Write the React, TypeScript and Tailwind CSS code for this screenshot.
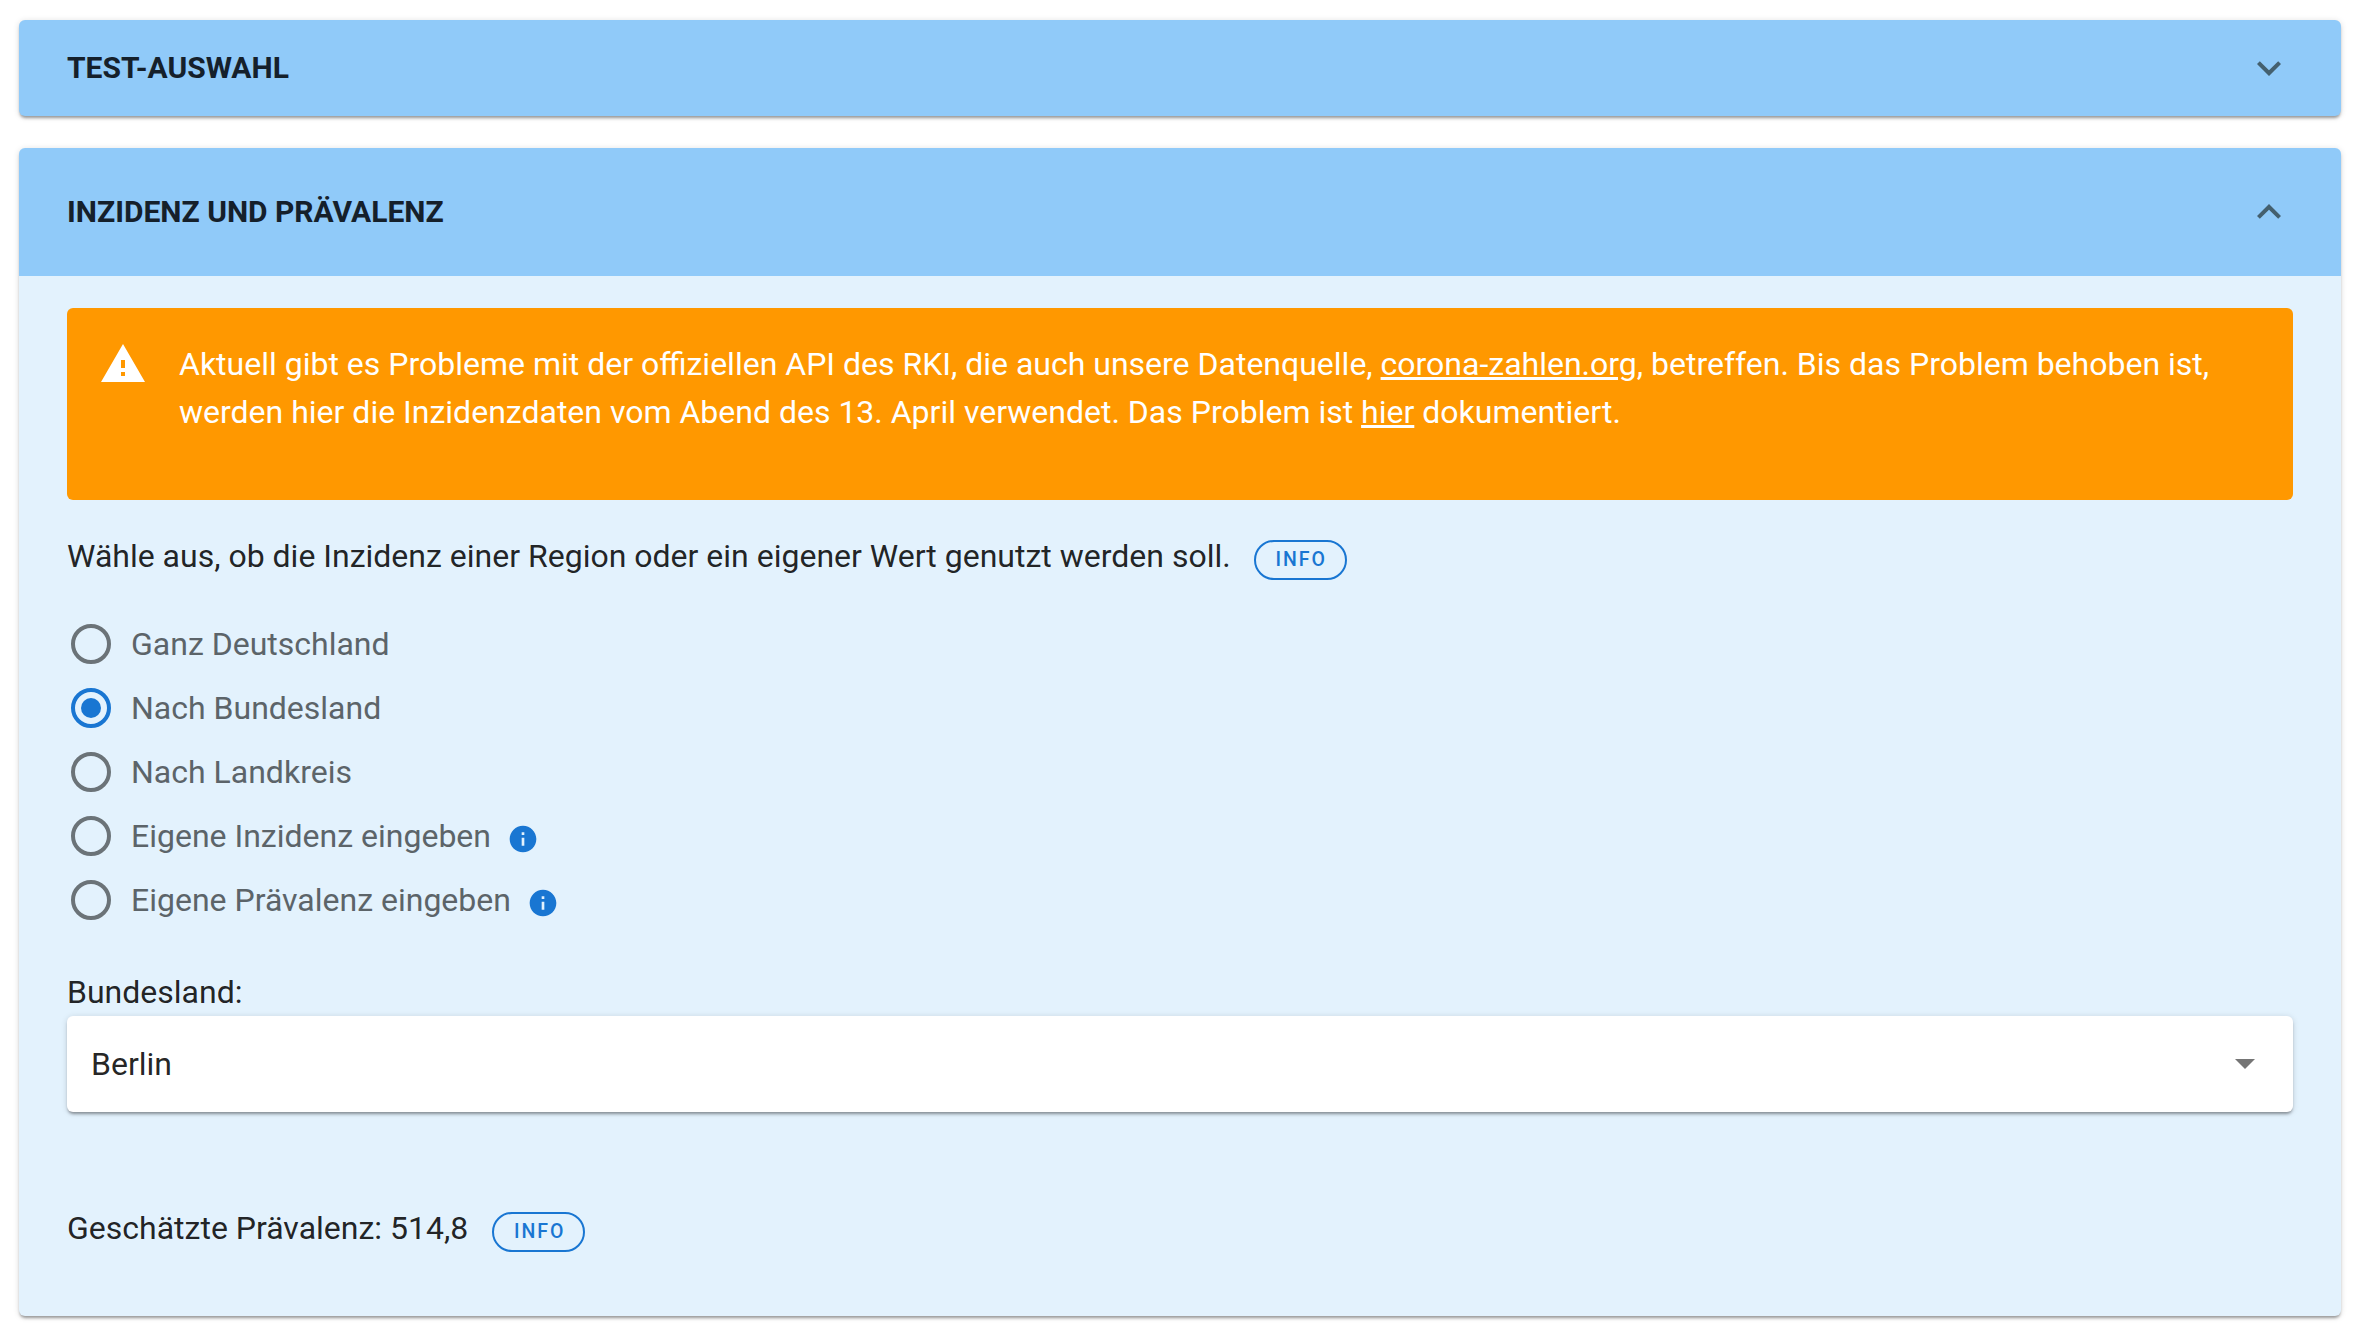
import React from 'react';

const radios = [
  { label: 'Ganz Deutschland' },
  { label: 'Nach Bundesland', checked: true },
  { label: 'Nach Landkreis' },
  { label: 'Eigene Inzidenz eingeben', info: true },
  { label: 'Eigene Prävalenz eingeben', info: true },
];

function InfoButton() {
  return (
    <span className="mt-[8px] inline-flex h-[40px] w-[93px] items-center justify-center rounded-full border-[2px] border-[#1976d2] pl-[2px] text-[19.5px] font-medium tracking-[0.1em] text-[#1976d2]">
      INFO
    </span>
  );
}

function InfoDot() {
  return (
    <svg viewBox="0 0 24 24" className="h-[32px] w-[32px]">
      <path
        fill="#1976d2"
        d="M12 2C6.48 2 2 6.48 2 12s4.48 10 10 10 10-4.48 10-10S17.52 2 12 2zm1 15h-2v-6h2v6zm0-8h-2V7h2v2z"
      />
    </svg>
  );
}

function Radio({ checked }: { checked?: boolean }) {
  return (
    <span
      className={`flex h-[40px] w-[40px] items-center justify-center rounded-full border-[4px] ${
        checked ? 'border-[#1976d2]' : 'border-[#6b7378]'
      }`}
    >
      {checked && <span className="h-[20px] w-[20px] rounded-full bg-[#1976d2]" />}
    </span>
  );
}

function Chevron({ up }: { up?: boolean }) {
  return (
    <svg viewBox="0 0 24 24" className="h-[48px] w-[48px]">
      <path
        fill="#44606f"
        d={up ? 'M12 8l-6 6 1.41 1.41L12 10.83l4.59 4.58L18 14z' : 'M16.59 8.59L12 13.17 7.41 8.59 6 10l6 6 6-6z'}
      />
    </svg>
  );
}

export default function App() {
  return (
    <div className="min-h-[1338px] bg-white pt-[20px] pr-[21px] pl-[19px] font-['Roboto',sans-serif] text-[30px] text-[rgba(0,0,0,0.87)]">
      <div className="flex h-[96px] items-center justify-between rounded-[6px] bg-[#90caf9] px-[48px] shadow-[0_3px_3px_-1px_rgba(0,0,0,0.35),0_1px_6px_0_rgba(0,0,0,0.14)]">
        <span className="mb-[1px] text-[30px] font-bold text-[#15202b]">TEST-AUSWAHL</span>
        <Chevron />
      </div>

      <div className="mt-[32px] overflow-hidden rounded-[6px] bg-[#e3f2fd] shadow-[0_3px_3px_-1px_rgba(0,0,0,0.35),0_1px_6px_0_rgba(0,0,0,0.14)]">
        <div className="flex h-[128px] items-center justify-between bg-[#90caf9] px-[48px]">
          <span className="mb-[1px] text-[30px] font-bold text-[#15202b]">INZIDENZ UND PRÄVALENZ</span>
          <Chevron up />
        </div>

        <div className="h-[1040px] px-[48px] pt-[32px]">
          <div className="flex h-[192px] gap-[32px] rounded-[6px] bg-[#ff9800] pt-[32px] pl-[32px] text-white">
            <svg viewBox="0 0 24 24" className="h-[48px] w-[48px] shrink-0">
              <path fill="white" d="M1 21h22L12 2 1 21zm12-3h-2v-2h2v2zm0-4h-2v-4h2v4z" />
            </svg>
            <p className="text-[32px] leading-[48px]">
              Aktuell gibt es Probleme mit der offiziellen API des RKI, die auch unsere Datenquelle,{' '}
              <span className="underline">corona-zahlen.org</span>, betreffen. Bis das Problem behoben ist,
              <br />
              werden hier die Inzidenzdaten vom Abend des 13. April verwendet. Das Problem ist{' '}
              <span className="underline">hier</span> dokumentiert.
            </p>
          </div>

          <div className="mt-[32px] flex items-center gap-[23px] text-[32px]">
            <span>Wähle aus, ob die Inzidenz einer Region oder ein eigener Wert genutzt werden soll.</span>
            <InfoButton />
          </div>

          <div className="mt-[32px] flex flex-col">
            {radios.map((r) => (
              <div key={r.label} className="flex h-[64px] items-center pl-[4px] text-[32px] text-[#5c6469]">
                <Radio checked={r.checked} />
                <span className="ml-[20px]">{r.label}</span>
                {r.info && (
                  <span className="mt-[6px] ml-[16px]">
                    <InfoDot />
                  </span>
                )}
              </div>
            ))}
          </div>

          <div className="mt-[36px] text-[32px] leading-[48px]">Bundesland:</div>
          <div className="flex h-[96px] items-center justify-between rounded-[6px] bg-white pr-[38px] pl-[24px] text-[32px] shadow-[0_3px_3px_-1px_rgba(0,0,0,0.35),0_1px_6px_0_rgba(0,0,0,0.14)]">
            <span>Berlin</span>
            <span className="h-0 w-0 border-x-[10px] border-t-[10px] border-x-transparent border-t-[#757575]" />
          </div>

          <div className="mt-[92px] flex items-center gap-[24px] text-[32px]">
            <span>Geschätzte Prävalenz: 514,8</span>
            <InfoButton />
          </div>
        </div>
      </div>
    </div>
  );
}
